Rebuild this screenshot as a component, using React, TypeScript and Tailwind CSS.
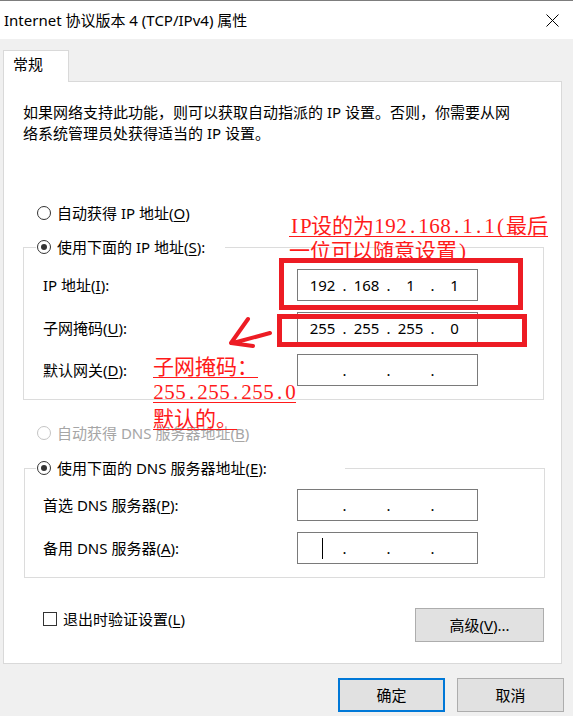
import type { ReactNode } from 'react'

const ui = "font-['Noto_Sans','Noto_Sans_CJK_SC',sans-serif]"
const song = "font-['Liberation_Serif','Noto_Sans_CJK_SC',serif]"

function Radio({ checked, disabled }: { checked?: boolean; disabled?: boolean }) {
  return (
    <span
      className={`flex h-[14px] w-[14px] shrink-0 items-center justify-center rounded-full border bg-white ${
        disabled ? 'border-[#c4c4c4]' : 'border-[#333333]'
      }`}
    >
      {checked && <span className="h-[6px] w-[6px] rounded-full bg-[#333333]" />}
    </span>
  )
}

function IpBox({ parts, caret }: { parts: string[]; caret?: boolean }) {
  return (
    <div className="flex h-[32px] w-[181px] items-center border border-[#7a7a7a] bg-white pl-[6px]">
      {parts.map((p, i) => (
        <div key={i} className="flex items-center">
          <span className="flex w-[37px] justify-center leading-[20px]">
            {caret && i === 0 ? <span className="h-[21px] w-px bg-black" /> : p}
          </span>
          {i < 3 && <span className="w-[7px] text-center leading-[20px]">.</span>}
        </div>
      ))}
    </div>
  )
}

function Row({ label, children, className }: { label: ReactNode; children: ReactNode; className?: string }) {
  return (
    <div className={`flex items-center ${className ?? ''}`}>
      <span className="w-[254px] leading-[20px]">{label}</span>
      {children}
    </div>
  )
}

function Btn({ children, primary, w }: { children: ReactNode; primary?: boolean; w: string }) {
  return (
    <div
      className={`flex h-[34px] items-center justify-center bg-[#e1e1e1] ${w} ${
        primary ? 'border-2 border-[#0078d7]' : 'border border-[#adadad]'
      }`}
    >
      {children}
    </div>
  )
}

// SimSun-ish metrics: ascii takes half a cell, CJK a full one
function Mono({ text }: { text: string }) {
  return (
    <>
      {Array.from(text).map((c, i) => (
        <span
          key={i}
          className={`inline-block text-center ${c.charCodeAt(0) < 128 ? 'w-[11px]' : 'w-[21px]'}`}
        >
          {c}
        </span>
      ))}
    </>
  )
}

function Note({ text, className }: { text: string; className: string }) {
  return (
    <div
      className={`absolute whitespace-nowrap text-[21px] leading-[20px] text-[#ff1a1a] ${song} ${className}`}
    >
      <Mono text={text} />
    </div>
  )
}

export default function App() {
  return (
    <div className={`relative h-[716px] w-[573px] overflow-hidden bg-[#f0f0f0] text-[15px] text-black ${ui}`}>
      {/* title bar */}
      <div className="flex h-[39px] items-center justify-between border-t border-[#7d7d7d] bg-white pl-[4px] pr-[14px]">
        <span className="leading-[20px]">Internet 协议版本 4 (TCP/IPv4) 属性</span>
        <svg width="13" height="13" viewBox="0 0 13 13" className="shrink-0">
          <path d="M0.5 0.5 L12.5 12.5 M12.5 0.5 L0.5 12.5" stroke="#000" strokeWidth="1" />
        </svg>
      </div>

      <div className="pl-[3px] pt-[11px]">
        {/* tab */}
        <div className="relative z-10 -mb-px h-[32px] w-[66px] border-l border-r border-t border-[#d9d9d9] bg-white pl-[9px] pt-[3px] leading-[20px]">
          常规
        </div>

        {/* panel */}
        <div className="h-[583px] w-[559px] border border-[#d9d9d9] bg-white">
          <p className="mt-[20px] pl-[19px] leading-[21px]">
            如果网络支持此功能，则可以获取自动指派的 IP 设置。否则，你需要从网
            <br />
            络系统管理员处获得适当的 IP 设置。
          </p>

          <div className="mt-[59px] flex h-[20px] items-center gap-[6px] pl-[33px]">
            <Radio />
            <span className="leading-[20px]">
              自动获得 IP 地址(<u className="underline-offset-2">O</u>)
            </span>
          </div>

          <fieldset className="ml-[19px] mt-[14px] w-[521px] border border-[#dcdcdc]">
            <legend className="ml-[12px] w-[189px] pl-[1px]">
              <div className="flex h-[20px] items-center gap-[6px]">
                <Radio checked />
                <span className="leading-[20px]">
                  使用下面的 IP 地址(<u className="underline-offset-2">S</u>):
                </span>
              </div>
            </legend>
            <div className="pb-[13px] pl-[19px] pt-[12px]">
              <Row label={<>IP 地址(<u className="underline-offset-2">I</u>):</>}>
                <IpBox parts={['192', '168', '1', '1']} />
              </Row>
              <Row className="mt-[11px]" label={<>子网掩码(<u className="underline-offset-2">U</u>):</>}>
                <IpBox parts={['255', '255', '255', '0']} />
              </Row>
              <Row className="mt-[10px]" label={<>默认网关(<u className="underline-offset-2">D</u>):</>}>
                <IpBox parts={['', '', '', '']} />
              </Row>
            </div>
          </fieldset>

          <div className="mt-[23px] flex h-[20px] items-center gap-[6px] pl-[33px] text-[#a6a6a6]">
            <Radio disabled />
            <span className="leading-[20px]">
              自动获得 DNS 服务器地址(<u className="underline-offset-2">B</u>)
            </span>
          </div>

          <fieldset className="ml-[20px] mt-[15px] w-[521px] border border-[#dcdcdc]">
            <legend className="ml-[11px] w-[309px] pl-[1px]">
              <div className="flex h-[20px] items-center gap-[6px]">
                <Radio checked />
                <span className="leading-[20px]">
                  使用下面的 DNS 服务器地址(<u className="underline-offset-2">E</u>):
                </span>
              </div>
            </legend>
            <div className="pb-[13px] pl-[18px] pt-[11px]">
              <Row label={<>首选 DNS 服务器(<u className="underline-offset-2">P</u>):</>}>
                <IpBox parts={['', '', '', '']} />
              </Row>
              <Row className="mt-[11px]" label={<>备用 DNS 服务器(<u className="underline-offset-2">A</u>):</>}>
                <IpBox parts={['', '', '', '']} caret />
              </Row>
            </div>
          </fieldset>

          <div className="mt-[30px] flex items-start justify-between pl-[39px] pr-[17px]">
            <div className="mt-[1px] flex h-[20px] items-center gap-[6px]">
              <span className="h-[14px] w-[14px] border border-[#333333] bg-white" />
              <span className="leading-[20px]">
                退出时验证设置(<u className="underline-offset-2">L</u>)
              </span>
            </div>
            <Btn w="w-[129px]">
              高级(<u className="underline-offset-2">V</u>)...
            </Btn>
          </div>
        </div>

        <div className="mt-[14px] flex justify-end gap-[12px] pr-[9px]">
          <Btn primary w="w-[107px]">确定</Btn>
          <Btn w="w-[107px]">取消</Btn>
        </div>
      </div>

      {/* red annotations drawn over the dialog */}
      <Note text="IP设的为192.168.1.1(最后" className="left-[289px] top-[216px] h-[21px] border-b border-[#ff1a1a]" />
      <Note text="一位可以随意设置)" className="left-[289px] top-[241px] h-[17px] overflow-hidden leading-[21px]" />
      <div className="absolute left-[279px] top-[258px] h-[52px] w-[244px] border-[5px] border-[#ed1c24]" />
      <div className="absolute left-[277px] top-[314px] h-[33px] w-[250px] border-[5px] border-[#ed1c24]" />
      <svg className="absolute left-[225px] top-[312px]" width="55" height="40" viewBox="0 0 55 40">
        <path
          d="M45 21 L8 31 M23 7 L6 31 L28 34"
          fill="none"
          stroke="#ed1c24"
          strokeWidth="4"
          strokeLinecap="round"
          strokeLinejoin="round"
        />
      </svg>
      <Note text="子网掩码：" className="left-[153px] top-[357px] h-[21px] border-b border-[#ff1a1a]" />
      <Note text="255.255.255.0" className="left-[153px] top-[382px] h-[21px] border-b border-[#ff1a1a]" />
      <Note text="默认的。" className="left-[153px] top-[409px] h-[21px] border-b border-[#ff1a1a]" />
    </div>
  )
}
